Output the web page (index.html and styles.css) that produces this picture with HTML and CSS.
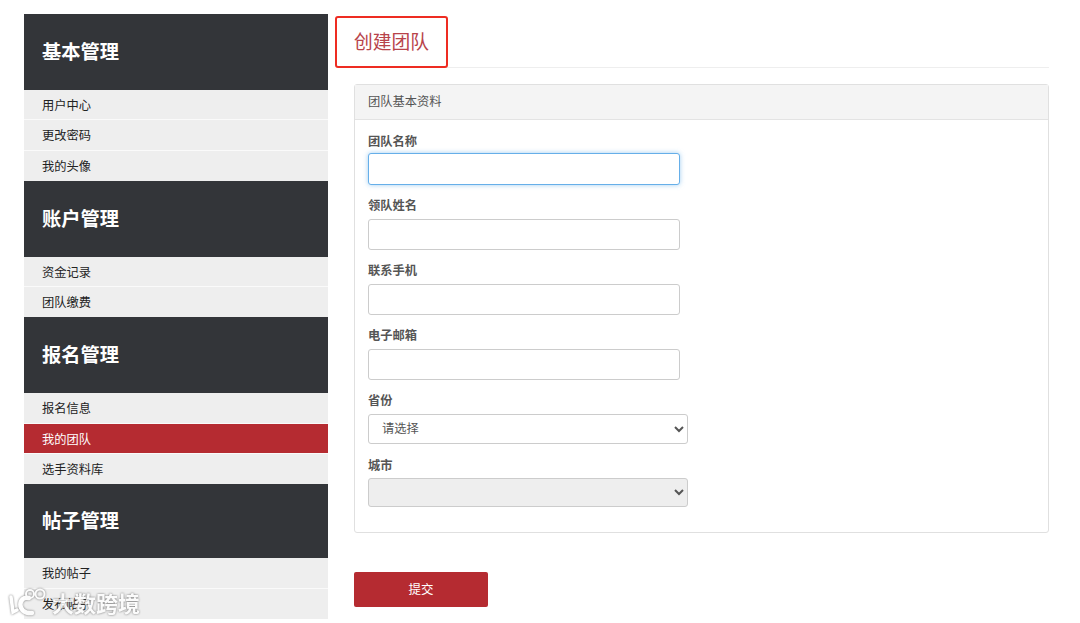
FILE: index.html
```html
<!DOCTYPE html>
<html lang="zh-CN">
<head>
<meta charset="utf-8">
<title>创建团队</title>
<link rel="stylesheet" href="styles.css">
</head>
<body>
<div class="page">
  <aside class="sidebar">
    <h2 class="group">基本管理</h2>
    <ul class="menu">
      <li class="item">用户中心</li>
      <li class="item">更改密码</li>
      <li class="item">我的头像</li>
    </ul>
    <h2 class="group">账户管理</h2>
    <ul class="menu">
      <li class="item">资金记录</li>
      <li class="item">团队缴费</li>
    </ul>
    <h2 class="group">报名管理</h2>
    <ul class="menu">
      <li class="item">报名信息</li>
      <li class="item active">我的团队</li>
      <li class="item">选手资料库</li>
    </ul>
    <h2 class="group short">帖子管理</h2>
    <ul class="menu">
      <li class="item">我的帖子</li>
      <li class="item">发布帖子</li>
    </ul>
  </aside>
  <main class="content">
    <h1 class="title">创建团队</h1>
    <form class="form">
      <section class="panel">
        <div class="panel-head">团队基本资料</div>
        <div class="panel-body">
          <div class="field first"><label class="label">团队名称</label><input class="control focus" type="text"></div>
          <div class="field"><label class="label">领队姓名</label><input class="control" type="text"></div>
          <div class="field"><label class="label">联系手机</label><input class="control" type="text"></div>
          <div class="field"><label class="label">电子邮箱</label><input class="control" type="text"></div>
          <div class="field"><label class="label">省份</label>
            <select class="control select"><option>请选择</option></select></div>
          <div class="field"><label class="label">城市</label>
            <select class="control select city" disabled><option></option></select></div>
        </div>
      </section>
      <button class="submit" type="button">提交</button>
    </form>
  </main>
</div>
<div class="annotation"></div>
<div class="watermark">
  <svg class="wm-logo" width="44" height="28" viewBox="0 0 44 28" aria-hidden="true">
    <g fill="none" stroke="#fff" stroke-linecap="round">
      <path d="M3 9 L5 24 L9 22" stroke-width="3.5"/>
      <path d="M21 10 C10 7 8 26 24 25" stroke-width="4.5"/>
      <circle cx="22" cy="6" r="4" stroke-width="2"/>
      <circle cx="32" cy="6" r="4.5" stroke-width="2"/>
    </g>
  </svg>
  <span class="wm-text">大数跨境</span>
</div>
</body>
</html>
```
FILE: styles.css
```css
* { box-sizing: border-box; }
html, body { margin: 0; padding: 0; background: #fff; }
body {
  width: 1080px;
  height: 623px;
  overflow: hidden;
  position: relative;
  font-family: "Liberation Sans", "Noto Sans CJK SC", sans-serif;
  color: #333;
}
.page { display: flex; padding: 14px 31px 0 24px; gap: 26px; }
.sidebar { width: 304px; flex: none; }
.group {
  margin: 0;
  height: 76px;
  background: #333539;
  color: #fff;
  font-size: 19.25px;
  font-weight: 700;
  line-height: 78px;
  padding-left: 18px;
}
.group.short { height: 74.5px; line-height: 76.5px; }
.menu { list-style: none; margin: 0; padding: 0; }
.item {
  height: 30.4px;
  line-height: 32px;
  background: #eee;
  border-bottom: 1px solid #fafafa;
  padding-left: 18px;
  font-size: 12.25px;
  color: #222;
}
.item:last-child { height: 30px; border-bottom: 0; }
.item.active { background: #b52b31; color: #fff; }
.content { flex: 1; min-width: 0; }
.title {
  margin: 0;
  height: 54px;
  border-bottom: 1px solid #eee;
  font-size: 18.75px;
  font-weight: 400;
  line-height: 58px;
  color: #b8434a;
}
.form { margin-top: 16px; }
.panel { border: 1px solid #e0e0e0; border-radius: 3px; height: 449px; }
.panel-head {
  height: 35px;
  line-height: 34px;
  background: #f4f4f4;
  border-bottom: 1px solid #e3e3e3;
  padding-left: 13px;
  font-size: 12.25px;
  color: #555;
}
.panel-body { padding: 15px 13px 0; }
.field { display: flex; flex-direction: column; align-items: flex-start; margin-bottom: 14.2px; }
.field.first { margin-bottom: 14.6px; }
.label { font-size: 12.25px; font-weight: 700; color: #555; line-height: 15px; margin-bottom: 5px; }
.first .label { margin-bottom: 3px; }
.control {
  display: block;
  width: 312px;
  height: 31px;
  padding: 0 13px;
  border: 1px solid #ccc;
  border-radius: 3px;
  background: #fff;
  font: 12.25px "Liberation Sans", "Noto Sans CJK SC", sans-serif;
  color: #555;
}
.focus { height: 32px; margin-bottom: -1px; border-color: #66afe9; box-shadow: 0 0 5px rgba(102, 175, 233, .6); outline: 0; }
.select { width: 320px; height: 30px; padding: 0 9px; margin-bottom: 1px; }
.city { height: 29px; margin-top: -1.5px; }
.select:disabled { background-color: #eee; opacity: 1; }
.submit {
  display: block;
  margin-top: 39px;
  width: 134px;
  height: 35px;
  padding: 0 0 2px;
  border: 0;
  border-radius: 2px;
  background: #b52b31;
  color: #fff;
  font: 12.5px "Liberation Sans", "Noto Sans CJK SC", sans-serif;
}
.annotation {
  position: absolute;
  left: 335px;
  top: 16px;
  width: 113px;
  height: 52px;
  border: 2.5px solid #ee2c22;
  border-radius: 3px;
}
.watermark {
  position: absolute;
  left: 8px;
  top: 586px;
  display: flex;
  align-items: center;
  opacity: .8;
  filter: drop-shadow(0 0 1px #555);
}
.wm-text { font-size: 22px; font-weight: 700; color: #fff; }
```
